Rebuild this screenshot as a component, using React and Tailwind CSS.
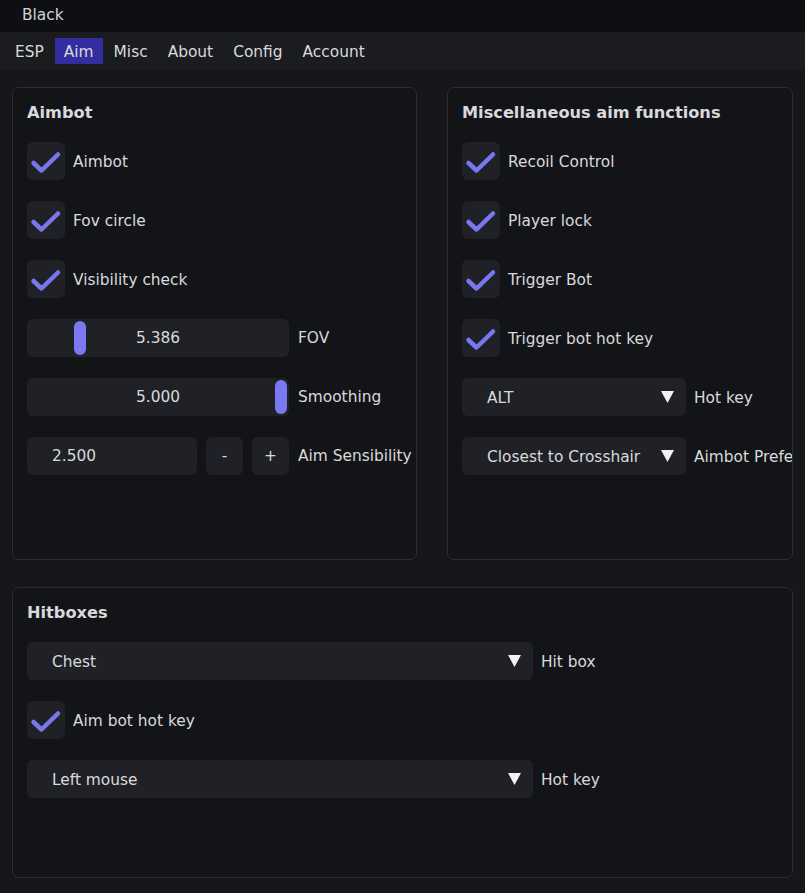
import React from "react";

function Check() {
  return (
    <div className="w-[38px] h-[38px] rounded-[6px] bg-[#1f2127] flex items-center justify-center shrink-0">
      <svg width="38" height="38" viewBox="0 0 38 38">
        <polyline points="6.5,21 14.5,28.5 31,12.5" fill="none" stroke="#7977ee" strokeWidth="4.5" strokeLinecap="round" strokeLinejoin="round" />
      </svg>
    </div>
  );
}

function CheckRow({ label }) {
  return (
    <div className="flex items-center gap-[8px] h-[38px]">
      <Check />
      <span className="whitespace-nowrap pt-[3px]">{label}</span>
    </div>
  );
}

function Slider({ value, pos, label }) {
  return (
    <div className="flex items-center gap-[9px] h-[38px]">
      <div className="relative w-[262px] h-[38px] rounded-[6px] bg-[#1f2127] flex items-center justify-center shrink-0">
        <span className="pt-[2px]">{value}</span>
        <div className="absolute top-[2px] w-[12px] h-[34px] rounded-[6px] bg-[#7a79f2]" style={{ left: pos }} />
      </div>
      <span className="whitespace-nowrap pt-[2px]">{label}</span>
    </div>
  );
}

function Arrow() {
  return (
    <svg width="13" height="12" viewBox="0 0 13 12" className="shrink-0">
      <polygon points="0,0 13,0 6.5,12" fill="#f2f2f2" />
    </svg>
  );
}

function Combo({ value, label, width }) {
  return (
    <div className="flex items-center gap-[8px] h-[38px]">
      <div className={`${width} h-[38px] rounded-[6px] bg-[#1f2127] flex items-center justify-between pl-[25px] pr-[12px] shrink-0`}>
        <span className="whitespace-nowrap pt-[3px]">{value}</span>
        <Arrow />
      </div>
      <span className="whitespace-nowrap pt-[3px]">{label}</span>
    </div>
  );
}

function Panel({ title, className, children }) {
  return (
    <div className={`${className} rounded-[7px] border border-[#2b2d33] bg-[#131418] pl-[14px] pt-[14px] overflow-hidden`}>
      <div className="font-bold text-[16.2px] h-[20px] leading-[20px] pt-[1px] whitespace-nowrap">{title}</div>
      <div className="mt-[20px] flex flex-col gap-[21px]">{children}</div>
    </div>
  );
}

export default function App() {
  const tabs = ["ESP", "Aim", "Misc", "About", "Config", "Account"];
  return (
    <div className="w-[805px] h-[893px] bg-[#16171b] text-[#d9d9dc] text-[15.4px] font-['DejaVu_Sans',sans-serif] overflow-hidden">
      <div className="h-[32px] bg-[#0e0f12] flex items-center pl-[22px]">
        <span className="text-[#d4d4d6]">Black</span>
      </div>
      <div className="h-[38px] bg-[#1b1c20] flex items-center pl-[6px] gap-[2px]">
        {tabs.map((t) => (
          <div
            key={t}
            className={`h-[26px] px-[9px] pt-[3px] flex items-center ${t === "Aim" ? "bg-[#322ea0]" : ""}`}
          >
            {t}
          </div>
        ))}
      </div>
      <div className="pt-[17px] px-[12px] flex flex-col gap-[27px]">
        <div className="flex gap-[30px]">
          <Panel title="Aimbot" className="w-[405px] h-[473px]">
            <CheckRow label="Aimbot" />
            <CheckRow label="Fov circle" />
            <CheckRow label="Visibility check" />
            <Slider value="5.386" pos="47px" label="FOV" />
            <Slider value="5.000" pos="248px" label="Smoothing" />
            <div className="flex items-center h-[38px]">
              <div className="w-[170px] h-[38px] rounded-[6px] bg-[#1f2127] flex items-center pl-[25px] pt-[2px] shrink-0">2.500</div>
              <div className="ml-[9px] w-[37px] h-[38px] rounded-[6px] bg-[#1f2127] flex items-center justify-center pt-[2px] shrink-0">-</div>
              <div className="ml-[9px] w-[37px] h-[38px] rounded-[6px] bg-[#1f2127] flex items-center justify-center pt-[2px] shrink-0">+</div>
              <span className="ml-[9px] whitespace-nowrap pt-[2px]">Aim Sensibility</span>
            </div>
          </Panel>
          <Panel title="Miscellaneous aim functions" className="w-[346px] h-[473px]">
            <CheckRow label="Recoil Control" />
            <CheckRow label="Player lock" />
            <CheckRow label="Trigger Bot" />
            <CheckRow label="Trigger bot hot key" />
            <Combo value="ALT" label="Hot key" width="w-[224px]" />
            <Combo value="Closest to Crosshair" label="Aimbot Preference" width="w-[224px]" />
          </Panel>
        </div>
        <Panel title="Hitboxes" className="w-[781px] h-[291px]">
          <Combo value="Chest" label="Hit box" width="w-[506px]" />
          <CheckRow label="Aim bot hot key" />
          <Combo value="Left mouse" label="Hot key" width="w-[506px]" />
        </Panel>
      </div>
    </div>
  );
}
